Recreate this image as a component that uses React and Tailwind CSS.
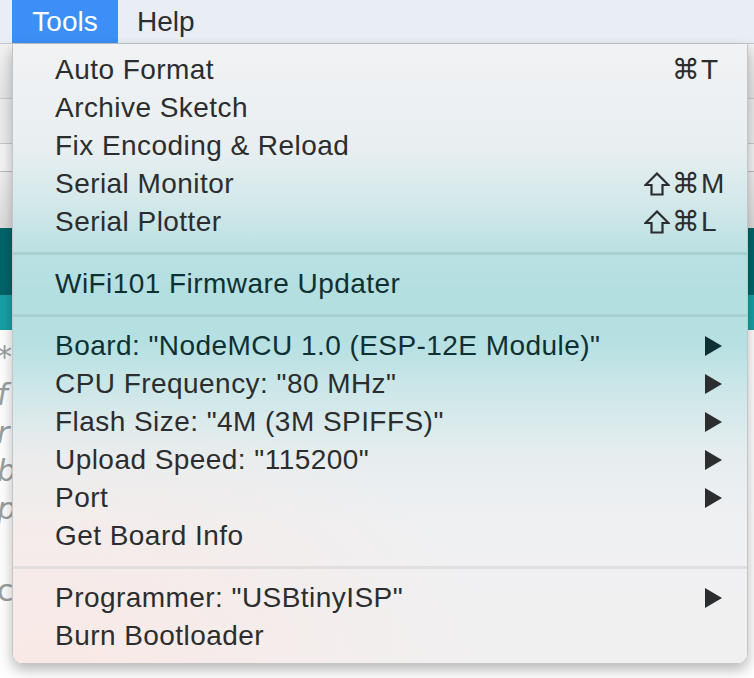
import React from 'react';

const groups = [
  [
    { label: 'Auto Format', mods: ['cmd'], key: 'T' },
    { label: 'Archive Sketch' },
    { label: 'Fix Encoding & Reload' },
    { label: 'Serial Monitor', mods: ['shift', 'cmd'], key: 'M' },
    { label: 'Serial Plotter', mods: ['shift', 'cmd'], key: 'L' },
  ],
  [{ label: 'WiFi101 Firmware Updater', teal: true }],
  [
    { label: 'Board: "NodeMCU 1.0 (ESP-12E Module)"', sub: true, teal: true },
    { label: 'CPU Frequency: "80 MHz"', sub: true },
    { label: 'Flash Size: "4M (3M SPIFFS)"', sub: true },
    { label: 'Upload Speed: "115200"', sub: true },
    { label: 'Port', sub: true },
    { label: 'Get Board Info' },
  ],
  [
    { label: 'Programmer: "USBtinyISP"', sub: true },
    { label: 'Burn Bootloader' },
  ],
];

function Arrow() {
  return (
    <svg width="17" height="20" viewBox="0 0 17 20" className="shrink-0">
      <polygon points="0,0 17,10 0,20" fill="currentColor" />
    </svg>
  );
}

function Shift() {
  return (
    <svg width="26" height="24" viewBox="0 0 26 24" className="mr-[2px]">
      <polygon
        points="13,1.5 24.5,13 18.5,13 18.5,22.5 7.5,22.5 7.5,13 1.5,13"
        fill="none"
        stroke="currentColor"
        strokeWidth="2.2"
        strokeLinejoin="miter"
      />
    </svg>
  );
}

function Row({ item }) {
  return (
    <div
      className={
        'flex h-[38px] items-center pl-[42px] pr-[25px] ' +
        (item.teal ? 'text-[#0f3033]' : 'text-[#2b2d2e]')
      }
    >
      <span className="flex-1 whitespace-nowrap tracking-[0.45px]">{item.label}</span>
      {item.mods && (
        <span className="flex items-center">
          {item.mods.includes('shift') && <Shift />}
          <span className="font-['DejaVu_Sans',sans-serif] text-[28px]">⌘</span>
          <span className="w-[22px] pl-[1px] text-left">{item.key}</span>
        </span>
      )}
      {item.sub && <Arrow />}
    </div>
  );
}

export default function App() {
  return (
    <div className="relative h-[678px] w-[754px] overflow-hidden bg-white font-['Liberation_Sans',Arial,sans-serif] text-[28px] leading-none">
      {/* menu bar */}
      <div className="flex h-[44px] items-stretch border-b border-[#c4c6c9] bg-[#e9eef4]">
        <div className="ml-[12px] flex w-[106px] items-center justify-center bg-[#3b8ff6] text-white">Tools</div>
        <div className="ml-[19px] flex items-center text-[#2b2d2e]">Help</div>
      </div>

      {/* IDE behind the menu */}
      <div className="h-[54px] bg-[linear-gradient(#f2f2f2,#e4e4e4)]" />
      <div className="h-[46px] border-y border-[#c9c9c9] bg-[#ebebeb]" />
      <div className="h-[28px] border-b border-[#bdbdbd] bg-[#f4f4f4]" />
      <div className="h-[56px] bg-[linear-gradient(#eeeeee,#dcdcdc)]" />
      <div className="h-[67px] bg-[#00656a]" />
      <div className="h-[35px] bg-[#17a0a4]" />
      <div className="ml-[-3px] flex flex-col pt-[8px] font-['DejaVu_Sans',sans-serif] text-[30px] leading-[38px] text-[#9aa0a0]">
        <span>*</span>
        <span className="italic">f</span>
        <span className="italic">r</span>
        <span className="italic">b</span>
        <span className="italic">p</span>
        <span className="h-[44px]" />
        <span>c</span>
      </div>

      {/* Tools menu */}
      <div className="absolute left-[12px] top-[44px] h-[620px] w-[736px] overflow-hidden rounded-b-[10px] border-x border-b border-[#c3c5c7] shadow-[0_6px_14px_rgba(0,0,0,0.28)]">
        <div className="absolute inset-0 bg-[linear-gradient(180deg,#f1f2f4_0px,#e9eff1_100px,#d3e8ea_160px,#bae0e2_210px,#b3dfe1_250px,#b6e0e2_300px,#cae6e8_340px,#e6edef_410px,#eff0f2_480px,#f1f0f1_620px)]" />
        <div className="absolute inset-0 bg-[radial-gradient(ellipse_60%_45%_at_5%_100%,rgba(250,232,228,0.9),rgba(250,232,228,0))]" />
        <div className="relative flex flex-col pt-[7px]">
          {groups.map((g, gi) => (
            <React.Fragment key={gi}>
              {gi > 0 && (
                <div className="flex h-[24px] items-center">
                  <div
                    className={
                      'h-[3px] w-full ' +
                      (gi === 3 ? 'bg-[#e2dfe0]' : 'bg-[#a7d0d1]')
                    }
                  />
                </div>
              )}
              {g.map((item) => (
                <Row key={item.label} item={item} />
              ))}
            </React.Fragment>
          ))}
        </div>
      </div>
    </div>
  );
}
